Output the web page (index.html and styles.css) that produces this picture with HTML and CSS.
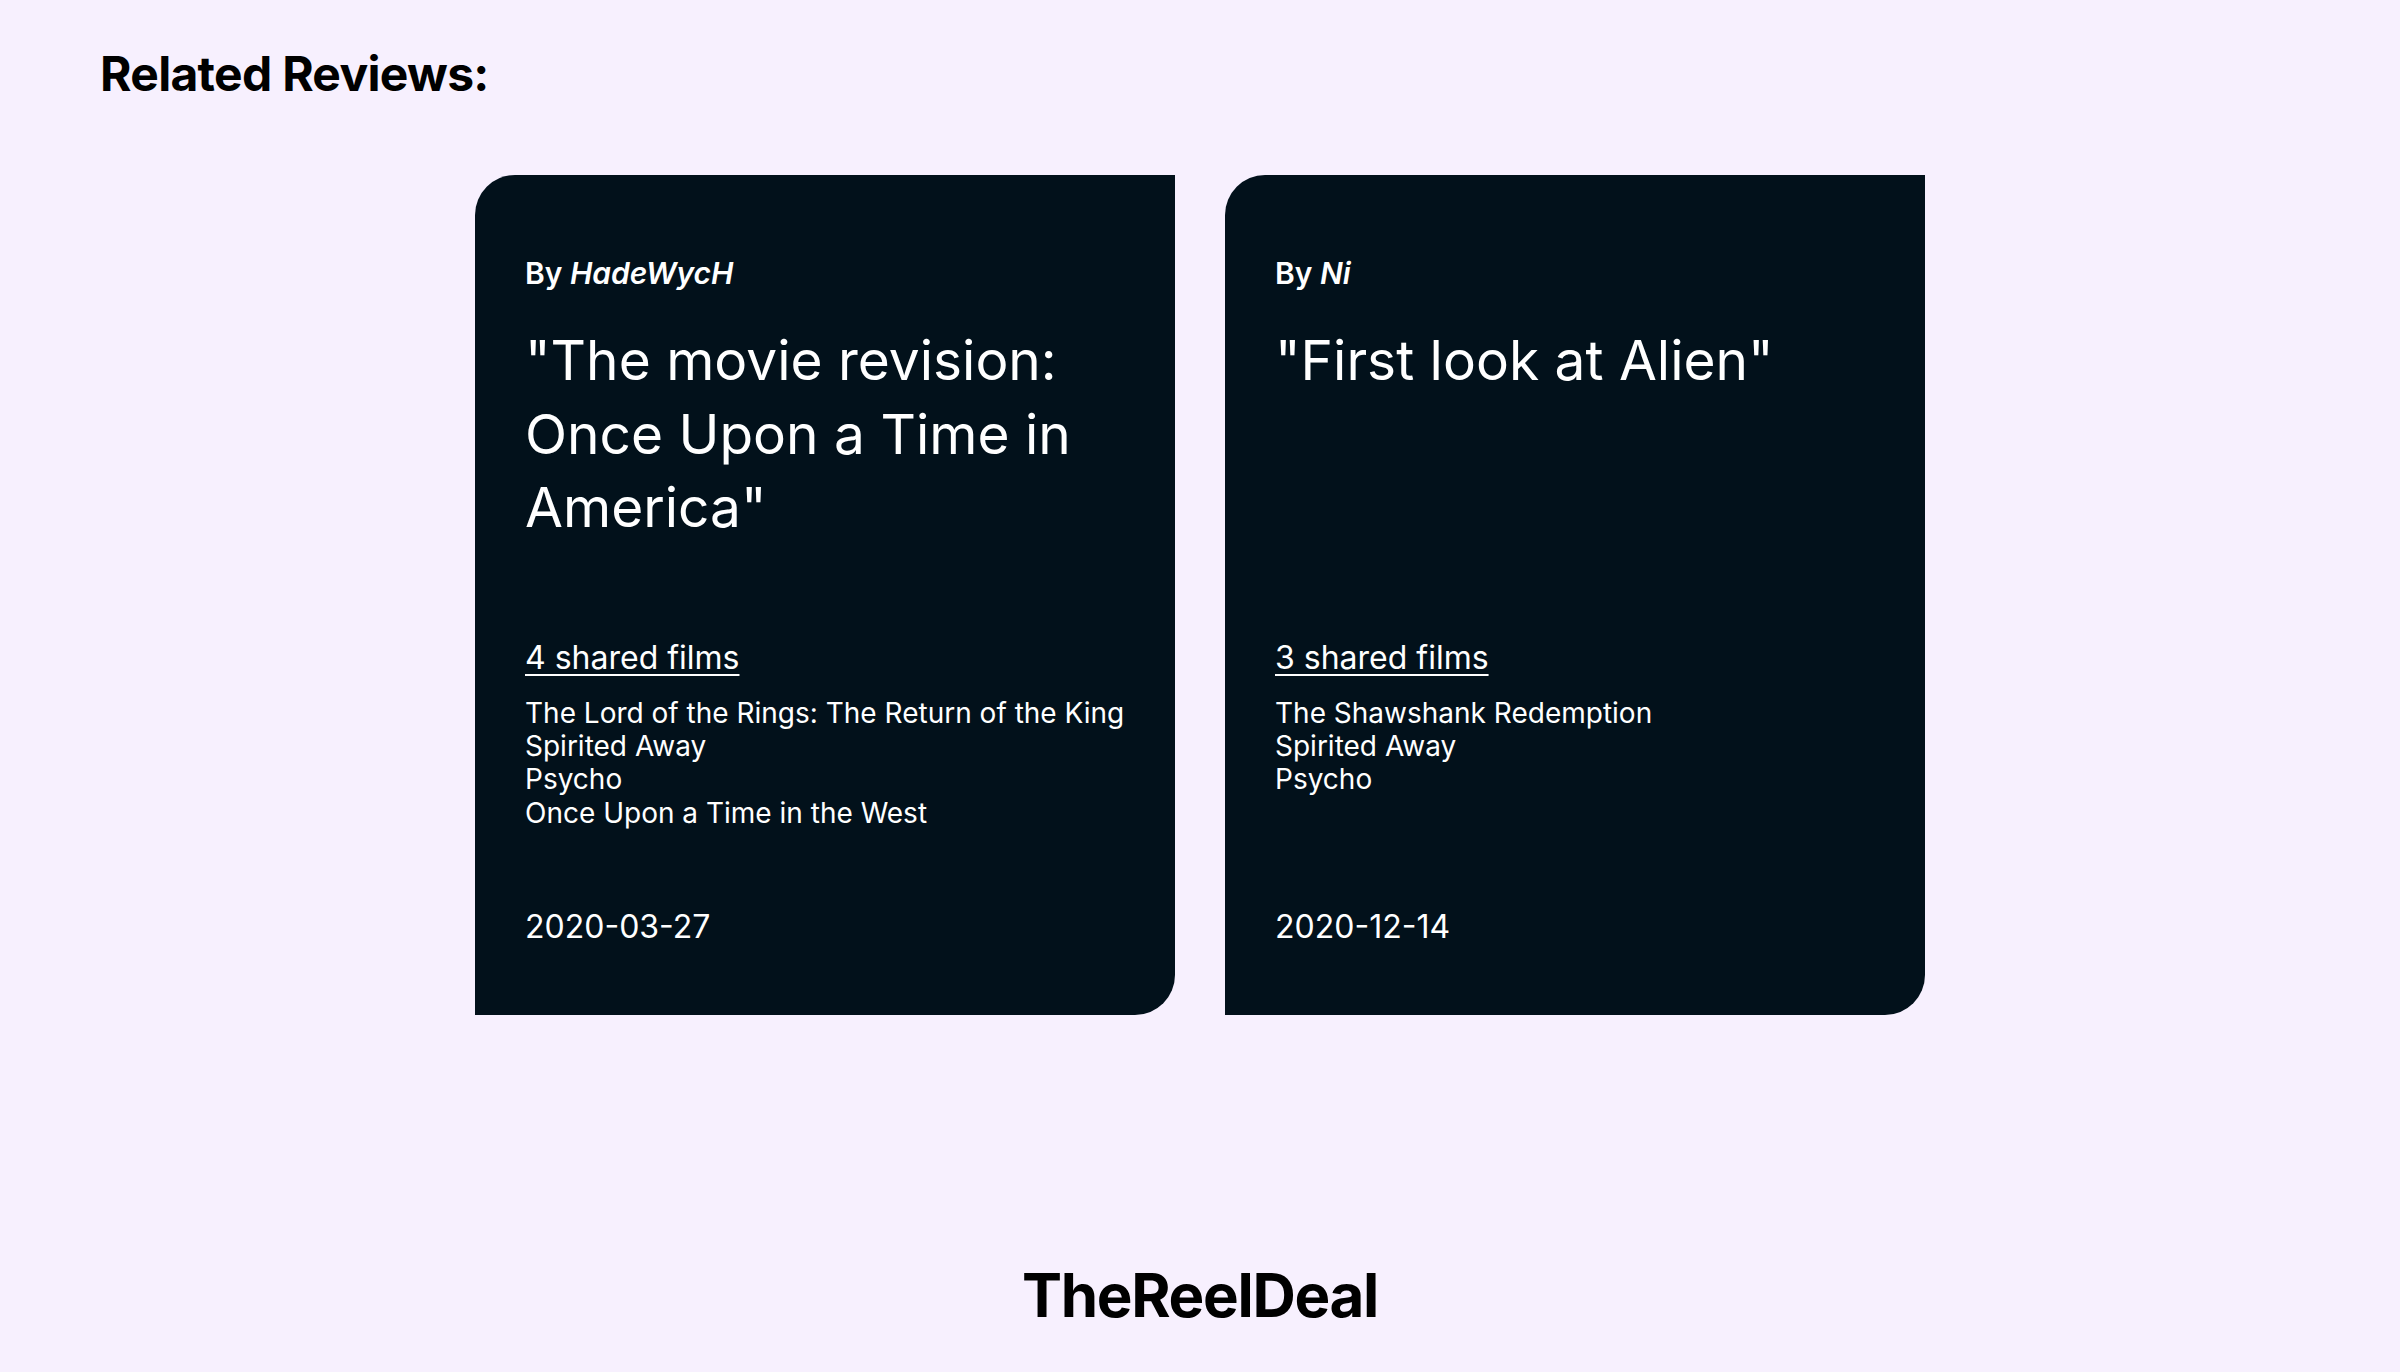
FILE: index.html
```html
<!DOCTYPE html>
<html lang="en">
<head>
<meta charset="utf-8">
<title>Related Reviews</title>
<link rel="stylesheet" href="styles.css">
</head>
<body>
<main class="page">
  <h2 class="section-title">Related Reviews:</h2>
  <section class="cards">
    <article class="card">
      <p class="author">By <em>HadeWycH</em></p>
      <h3 class="review-title">"The movie revision: Once Upon a Time in America"</h3>
      <a class="shared" href="#">4 shared films</a>
      <ul class="films">
        <li>The Lord of the Rings: The Return of the King</li>
        <li>Spirited Away</li>
        <li>Psycho</li>
        <li>Once Upon a Time in the West</li>
      </ul>
      <p class="date">2020-03-27</p>
    </article>
    <article class="card">
      <p class="author">By <em>Ni</em></p>
      <h3 class="review-title">"First look at Alien"</h3>
      <a class="shared" href="#">3 shared films</a>
      <ul class="films">
        <li>The Shawshank Redemption</li>
        <li>Spirited Away</li>
        <li>Psycho</li>
      </ul>
      <p class="date">2020-12-14</p>
    </article>
  </section>
  <footer class="footer">TheReelDeal</footer>
</main>
</body>
</html>
```
FILE: styles.css
```css
html, body {
  margin: 0;
  padding: 0;
  background: #f7f0fe;
}
body {
  font-family: Inter, "Noto Sans", "Liberation Sans", sans-serif;
  color: #000;
}
.page {
  display: flex;
  flex-direction: column;
  min-height: 1372px;
  box-sizing: border-box;
  padding: 45px 100px 40px;
}
.section-title {
  margin: 0;
  font-size: 48px;
  font-weight: 700;
  line-height: 58px;
  letter-spacing: -0.7px;
}
.cards {
  display: flex;
  justify-content: center;
  gap: 50px;
  margin-top: 72px;
}
.card {
  width: 700px;
  height: 840px;
  box-sizing: border-box;
  background: #02111b;
  color: #fff;
  border-radius: 40px 0 40px 0;
  padding: 81px 50px 0 50px;
  display: flex;
  flex-direction: column;
}
.author {
  margin: 0;
  font-size: 30px;
  line-height: 34px;
  font-weight: 600;
}
.author em {
  font-style: italic;
}
.review-title {
  margin: 34px 0 0;
  height: 317px;
  font-size: 55px;
  line-height: 73.6px;
  font-weight: 400;
}
.shared {
  color: #fff;
  font-size: 32px;
  line-height: 34px;
  text-decoration: underline;
  text-underline-offset: 5px;
  text-decoration-thickness: 2px;
  align-self: flex-start;
}
.films {
  list-style: none;
  margin: 22px 0 0;
  padding: 0;
  font-size: 28px;
  line-height: 33.2px;
}
.date {
  margin: auto 0 0;
  padding-bottom: 70px;
  font-size: 32px;
  line-height: 36px;
}
.footer {
  margin-top: auto;
  text-align: center;
  font-size: 60px;
  line-height: 73px;
  font-weight: 700;
  letter-spacing: -1.3px;
}
```
